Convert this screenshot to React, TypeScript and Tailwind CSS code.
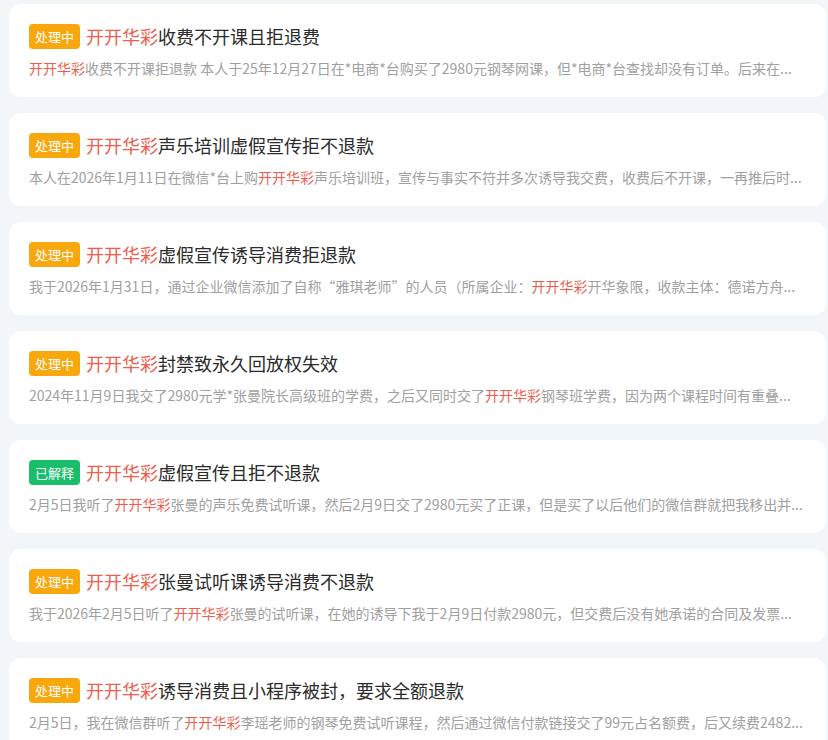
const BRAND = '开开华彩';

type Item = {
  status: 'pending' | 'done';
  title: string;
  before: string;
  after: string;
};

const items: Item[] = [
  {
    status: 'pending',
    title: '收费不开课且拒退费',
    before: '',
    after: '收费不开课拒退款 本人于25年12月27日在*电商*台购买了2980元钢琴网课，但*电商*台查找却没有订单。后来在...',
  },
  {
    status: 'pending',
    title: '声乐培训虚假宣传拒不退款',
    before: '本人在2026年1月11日在微信*台上购',
    after: '声乐培训班，宣传与事实不符并多次诱导我交费，收费后不开课，一再推后时...',
  },
  {
    status: 'pending',
    title: '虚假宣传诱导消费拒退款',
    before: '我于2026年1月31日，通过企业微信添加了自称“雅琪老师”的人员（所属企业：',
    after: '开华象限，收款主体：德诺方舟...',
  },
  {
    status: 'pending',
    title: '封禁致永久回放权失效',
    before: '2024年11月9日我交了2980元学*张曼院长高级班的学费，之后又同时交了',
    after: '钢琴班学费，因为两个课程时间有重叠...',
  },
  {
    status: 'done',
    title: '虚假宣传且拒不退款',
    before: '2月5日我听了',
    after: '张曼的声乐免费试听课，然后2月9日交了2980元买了正课，但是买了以后他们的微信群就把我移出并...',
  },
  {
    status: 'pending',
    title: '张曼试听课诱导消费不退款',
    before: '我于2026年2月5日听了',
    after: '张曼的试听课，在她的诱导下我于2月9日付款2980元，但交费后没有她承诺的合同及发票...',
  },
  {
    status: 'pending',
    title: '诱导消费且小程序被封，要求全额退款',
    before: '2月5日，我在微信群听了',
    after: '李瑶老师的钢琴免费试听课程，然后通过微信付款链接交了99元占名额费，后又续费2482...',
  },
];

function Badge({ status }: { status: Item['status'] }) {
  return (
    <span
      className={
        status === 'done'
          ? 'flex h-[25px] w-[51px] shrink-0 items-center justify-center rounded-[4px] bg-[#19be6b] text-[13px] text-white'
          : 'flex h-[25px] w-[51px] shrink-0 items-center justify-center rounded-[4px] bg-[#f8a70d] text-[13px] text-white'
      }
    >
      {status === 'done' ? '已解释' : '处理中'}
    </span>
  );
}

function Card({ item }: { item: Item }) {
  return (
    <div className="h-[93px] rounded-[12px] bg-white px-[20px] pt-[20px]">
      <div className="flex h-[25px] items-center gap-[6px]">
        <Badge status={item.status} />
        <h3 className="truncate text-[18px] leading-[25px] text-[#2b2b2b]">
          <span className="text-[#ee5d4e]">{BRAND}</span>
          {item.title}
        </h3>
      </div>
      <p className="mt-[9px] truncate text-[14px] leading-[20px] text-[#a0a0a0]">
        {item.before}
        <span className="text-[#ee5d4e]">{BRAND}</span>
        {item.after}
      </p>
    </div>
  );
}

export default function App() {
  return (
    <div
      className="min-h-[740px] bg-[#f3f6f8] pt-[4px] pl-[9px] pr-[2px]"
      style={{ fontFamily: '"Noto Sans CJK SC", "Noto Sans", sans-serif' }}
    >
      <div className="flex flex-col gap-[16px]">
        {items.map((item, i) => (
          <Card key={i} item={item} />
        ))}
      </div>
    </div>
  );
}
